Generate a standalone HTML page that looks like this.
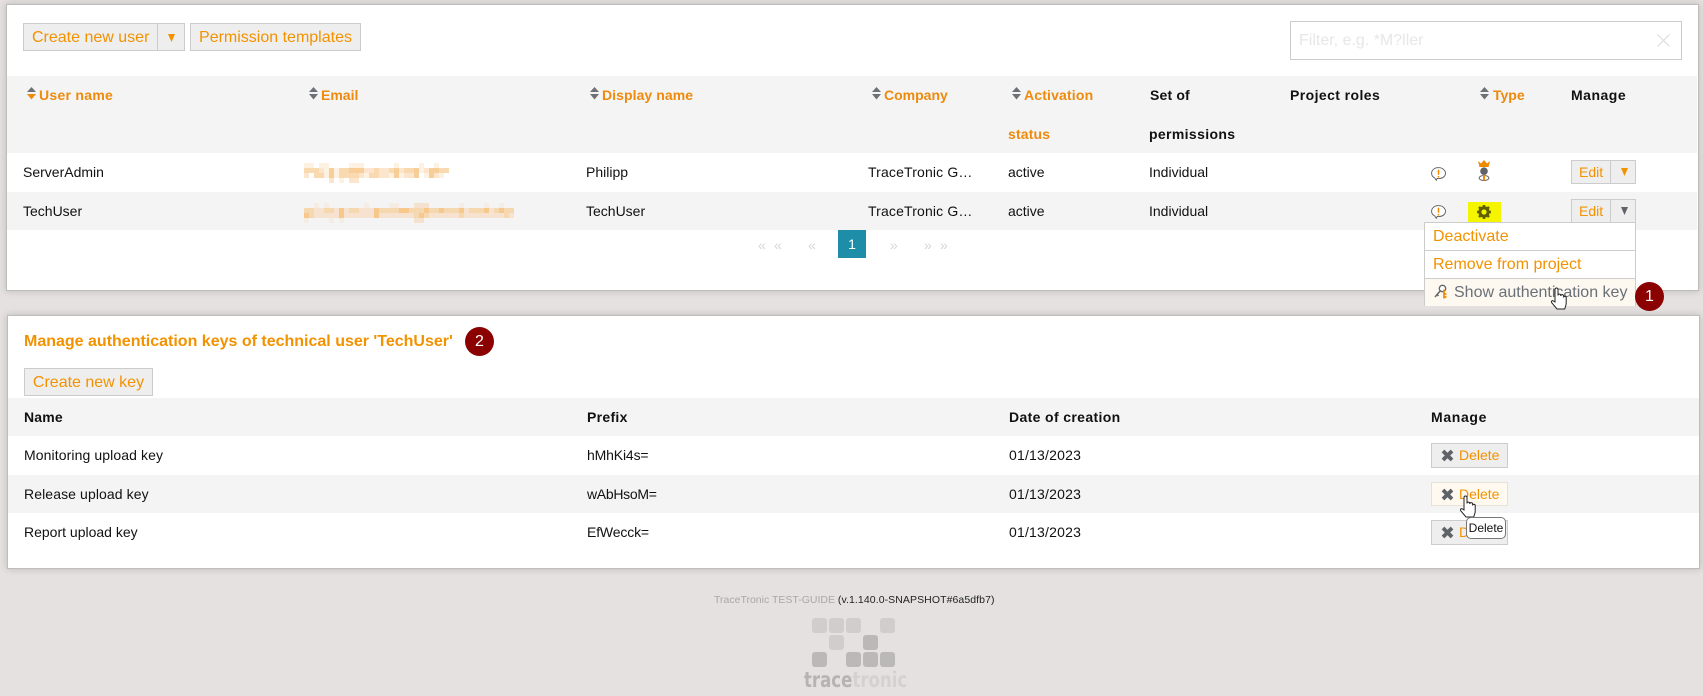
<!DOCTYPE html>
<html><head><meta charset="utf-8"><style>
html,body{margin:0;padding:0;width:1703px;height:696px;overflow:hidden;background:#e4e1e0;font-family:"Liberation Sans",Arial,sans-serif;font-size:14px;color:#111}
.a,.t,.b{position:absolute}
.t{white-space:nowrap;line-height:20px;height:20px}
.o{color:#f39200}
.h{font-weight:bold;letter-spacing:.16px}
.hs{font-weight:bold;color:#ee8a0c;letter-spacing:.16px}
.card{position:absolute;background:#fff;border:1px solid #bdbdbd;box-shadow:0 0 7px rgba(0,0,0,.18)}
.row{position:absolute;background:#f4f4f4}
.b{background:#eee;border:1px solid #ccc;box-sizing:border-box;color:#f39200;white-space:nowrap}
.bt{font-size:16px;line-height:28px;text-align:center}
svg{position:absolute;overflow:visible}
</style></head><body>

<div class="card" style="left:6px;top:4px;width:1691px;height:285px"></div>
<div class="row" style="left:7px;top:76px;width:1690px;height:77px"></div>
<div class="row" style="left:7px;top:192px;width:1690px;height:38px"></div>

<div class="b bt" style="left:23px;top:23px;width:162px;height:28px"><span style="position:absolute;left:8px;top:0">Create new user</span><span class="a" style="left:133px;top:0;bottom:0;border-left:1px solid #ccc"></span><svg style="left:143px;top:10px" width="9" height="8"><path d="M1 0h7L4.500 8z" fill="#f39200"/></svg></div>
<div class="b bt" style="left:190px;top:23px;width:171px;height:28px">Permission templates</div>

<div class="a" style="left:1290px;top:21px;width:392px;height:39px;box-sizing:border-box;border:1px solid #ccc;background:#fff"></div>
<div class="t" style="left:1299px;top:31px;font-size:16px;color:#e8e6e6">Filter, e.g. *M?ller</div>
<svg style="left:1657px;top:34px" width="13" height="13"><path d="M.5.500l12 12M12.500.5l-12 12" stroke="#dcdcdc" stroke-width="1.200" fill="none"/></svg>

<svg style="left:27px;top:87px" width="9" height="13"><path d="M4.500 0L9 5H0z" fill="#6d7077"/><path d="M0 7h9L4.500 12.500z" fill="#ee8a0c"/></svg>
<div class="t hs" style="left:39px;top:85px;letter-spacing:.28px">User name</div>
<svg style="left:309px;top:87px" width="9" height="13"><path d="M4.500 0L9 5H0z" fill="#6d7077"/><path d="M0 7h9L4.500 12.500z" fill="#6d7077"/></svg>
<div class="t hs" style="left:321px;top:85px;letter-spacing:0">Email</div>
<svg style="left:590px;top:87px" width="9" height="13"><path d="M4.500 0L9 5H0z" fill="#6d7077"/><path d="M0 7h9L4.500 12.500z" fill="#6d7077"/></svg>
<div class="t hs" style="left:602px;top:85px;letter-spacing:.07px">Display name</div>
<svg style="left:872px;top:87px" width="9" height="13"><path d="M4.500 0L9 5H0z" fill="#6d7077"/><path d="M0 7h9L4.500 12.500z" fill="#6d7077"/></svg>
<div class="t hs" style="left:884px;top:85px;letter-spacing:0">Company</div>
<svg style="left:1012px;top:87px" width="9" height="13"><path d="M4.500 0L9 5H0z" fill="#6d7077"/><path d="M0 7h9L4.500 12.500z" fill="#6d7077"/></svg>
<div class="t hs" style="left:1024px;top:85px">Activation</div>
<div class="t hs" style="left:1008px;top:124px">status</div>
<div class="t h" style="left:1150px;top:85px">Set of</div>
<div class="t h" style="left:1149px;top:124px;letter-spacing:.36px">permissions</div>
<div class="t h" style="left:1290px;top:85px;letter-spacing:.41px">Project roles</div>
<svg style="left:1480px;top:87px" width="9" height="13"><path d="M4.500 0L9 5H0z" fill="#6d7077"/><path d="M0 7h9L4.500 12.500z" fill="#6d7077"/></svg>
<div class="t hs" style="left:1493px;top:85px;letter-spacing:0">Type</div>
<div class="t h" style="left:1571px;top:85px;letter-spacing:.5px">Manage</div>

<div class="t" style="left:23px;top:162px">ServerAdmin</div>
<svg style="left:304px;top:163px" width="145" height="20">
<path fill="#f7cd98" d="M25 5h5v5h-5zM45 5h15v5h-15zM90 5h5v5h-5zM110 5h5v5h-5zM125 5h10v5h-10zM25 10h5v5h-5zM90 10h5v5h-5zM110 10h5v5h-5zM125 10h5v5h-5z"/>
<path fill="#f9d9b0" d="M0 5h15v5H0zM35 5h10v5H35zM70 5h5v5h-5zM85 5h5v5h-5zM100 5h10v5h-10zM135 5h10v5h-10zM10 10h10v5H10zM35 10h20v5H35zM65 10h10v5H65z"/>
<path fill="#fbe5cc" d="M15 5h5v5h-5zM60 5h10v5H60zM75 5h10v5H75zM95 5h5v5h-5zM120 5h5v5h-5zM0 10h5v5H0zM55 10h5v5h-5zM75 10h10v5H75zM100 10h10v5h-10zM130 10h5v5h-5zM25 15h5v5h-5zM45 15h10v5H45z"/>
<path fill="#fdf1e2" d="M0 0h10v5H0zM15 0h10v5H15zM45 0h15v5H45zM90 0h5v5h-5zM115 0h5v5h-5zM130 0h5v5h-5zM20 5h5v5h-5zM30 5h5v5h-5zM115 5h5v5h-5zM20 10h5v5h-5zM30 10h5v5h-5zM60 10h5v5h-5zM85 10h5v5h-5zM95 10h5v5h-5zM120 10h5v5h-5zM135 10h5v5h-5zM35 15h5v5h-5z"/>
</svg>
<div class="t" style="left:586px;top:162px">Philipp</div>
<div class="t" style="left:868px;top:162px;letter-spacing:.15px">TraceTronic G…</div>
<div class="t" style="left:1008px;top:162px">active</div>
<div class="t" style="left:1149px;top:162px">Individual</div>

<div class="t" style="left:23px;top:201px">TechUser</div>
<svg style="left:304px;top:203px" width="210" height="20">
<path fill="#f6e2cf" d="M0 10h210v5H0zM0 5h210v5H0z"/>
<path fill="#f6c88c" d="M35 5h5v5h-5zM70 5h5v5h-5zM95 5h10v5H95zM120 5h5v5h-5zM135 5h5v5h-5zM155 5h5v5h-5zM180 5h5v5h-5zM195 5h5v5h-5zM0 10h5v5H0zM35 10h5v5h-5zM70 10h5v5h-5zM115 10h5v5h-5z"/>
<path fill="#f6d8b0" d="M0 5h10v5H0zM20 5h10v5H20zM45 5h10v5H45zM75 5h10v5H75zM85 5h10v5H85zM105 5h15v5h-15zM125 5h10v5h-10zM140 5h15v5h-15zM165 5h15v5h-15zM190 5h5v5h-5zM200 5h10v5h-10zM5 10h5v5H5zM110 10h5v5h-5zM120 10h5v5h-5zM155 10h5v5h-5zM200 10h5v5h-5z"/>
<path fill="#f5ece4" d="M10 0h5v5h-5zM20 0h5v5h-5zM60 0h5v5h-5zM85 0h10v5H85zM155 0h5v5h-5zM180 0h5v5h-5zM195 0h5v5h-5zM0 15h5v5H0zM25 15h5v5h-5zM35 15h5v5h-5z"/>
<path fill="#f4e2cf" d="M110 0h15v5h-15zM110 15h10v5h-10z"/>
</svg>
<div class="t" style="left:586px;top:201px">TechUser</div>
<div class="t" style="left:868px;top:201px;letter-spacing:.15px">TraceTronic G…</div>
<div class="t" style="left:1008px;top:201px">active</div>
<div class="t" style="left:1149px;top:201px">Individual</div>

<svg style="left:1431px;top:167px" width="15" height="15"><path d="M7.500.6C3.700.6.600 3 .600 6.300c0 2.300 1.300 3.800 3.200 4.700.3.800.7 1.600 1.500 2.300.1-.7.400-1.300.9-1.800.6.100 1.200.1 1.800.1 3.700-.1 6.500-2.300 6.500-5.300S11.300.6 7.500.6z" fill="#fff" stroke="#5a5a5a" stroke-width=".9"/><path d="M7.500 2.800v5M7.500 9v1.500" stroke="#f08a00" stroke-width="1.500"/></svg>
<svg style="left:1431px;top:205px" width="15" height="15"><path d="M7.500.6C3.700.6.600 3 .600 6.300c0 2.300 1.300 3.800 3.200 4.700.3.800.7 1.600 1.500 2.300.1-.7.400-1.300.9-1.800.6.100 1.200.1 1.800.1 3.700-.1 6.500-2.300 6.500-5.300S11.300.6 7.500.6z" fill="#fff" stroke="#5a5a5a" stroke-width=".9"/><path d="M7.500 2.800v5M7.500 9v1.500" stroke="#f08a00" stroke-width="1.500"/></svg>

<svg style="left:1478px;top:160px" width="13" height="21"><path d="M0 1l3 2.500L6 0l3 3.500L12 1l-1.500 6h-9z" fill="#f08a00"/><circle cx="6" cy="11.200" r="3.800" fill="#606368"/><ellipse cx="6" cy="18" rx="4.800" ry="2.500" fill="#fff" stroke="#666" stroke-width="1"/><path d="M6 15v5.500" stroke="#f08a00" stroke-width="2"/></svg>

<div class="a" style="left:1468px;top:202px;width:33px;height:20px;background:#f5f500"></div>
<svg style="left:1477px;top:205px" width="14" height="14" viewBox="0 0 14 14"><circle cx="7" cy="7" r="4.200" fill="none" stroke="#5f5f00" stroke-width="3"/><path d="M7 0v14M0 7h14M2 2l10 10M12 2L2 12" stroke="#5f5f00" stroke-width="2.500"/><circle cx="7" cy="7" r="2.600" fill="#f5f500"/></svg>

<div class="b" style="left:1571px;top:160px;width:65px;height:24px;font-size:14px;line-height:22px"><span class="a" style="left:7px">Edit</span><span class="a" style="left:38px;top:0;bottom:0;border-left:1px solid #ccc"></span><svg style="left:48px;top:7px" width="9" height="8"><path d="M1 0h7L4.500 8z" fill="#f39200"/></svg></div>
<div class="b" style="left:1571px;top:199px;width:65px;height:24px;font-size:14px;line-height:22px"><span class="a" style="left:7px">Edit</span><span class="a" style="left:38px;top:0;bottom:0;border-left:1px solid #ccc"></span><svg style="left:48px;top:7px" width="9" height="8"><path d="M1 0h7L4.500 8z" fill="#5f6368"/></svg></div>

<div class="t" style="left:758px;top:235px;color:#d6d6d6">«</div>
<div class="t" style="left:774px;top:235px;color:#d6d6d6">«</div>
<div class="t" style="left:808px;top:235px;color:#d6d6d6">«</div>
<div class="a" style="left:838px;top:230px;width:28px;height:28px;background:#1e8ea8;color:#fff;text-align:center;line-height:28px">1</div>
<div class="t" style="left:890px;top:235px;color:#d6d6d6">»</div>
<div class="t" style="left:924px;top:235px;color:#d6d6d6">»</div>
<div class="t" style="left:940px;top:235px;color:#d6d6d6">»</div>

<div class="a" style="left:1424px;top:222px;width:212px;height:84px;box-sizing:border-box;background:#fff;border:1px solid #ccc;border-bottom:0"></div>
<div class="a" style="left:1425px;top:250px;width:210px;height:1px;background:#ccc"></div>
<div class="a" style="left:1425px;top:278px;width:210px;height:1px;background:#ccc"></div>
<div class="a" style="left:1425px;top:279px;width:210px;height:27px;background:#fef9f0"></div>
<div class="t o" style="left:1433px;top:227px;font-size:16px">Deactivate</div>
<div class="t o" style="left:1433px;top:255px;font-size:16px">Remove from project</div>
<svg style="left:1434px;top:284px" width="15" height="16"><circle cx="8.500" cy="4.500" r="3.200" fill="#fff" stroke="#666" stroke-width="1.300"/><path d="M6.500 6.500L1 13M3 10.500l1.500 1.500" stroke="#666" stroke-width="1.500" fill="none"/><path d="M10 5.500v9M10 10h2.500M10 13h2.500" stroke="#f08a00" stroke-width="1.700" fill="none"/></svg>
<div class="t" style="left:1454px;top:283px;font-size:16px;color:#6a7078">Show authentication key</div>

<div class="a" style="left:1635px;top:282px;width:29px;height:29px;border-radius:50%;background:#8b0000;color:#fff;text-align:center;line-height:29px;font-size:16px">1</div>

<div class="card" style="left:7px;top:315px;width:1691px;height:252px"></div>
<div class="t" style="left:24px;top:332px;font-size:16px;font-weight:bold;color:#f39200">Manage authentication keys of technical user 'TechUser'</div>
<div class="a" style="left:465px;top:327px;width:29px;height:29px;border-radius:50%;background:#8b0000;color:#fff;text-align:center;line-height:29px;font-size:16px">2</div>
<div class="b bt" style="left:24px;top:368px;width:129px;height:28px">Create new key</div>

<div class="row" style="left:8px;top:398px;width:1691px;height:38px"></div>
<div class="row" style="left:8px;top:475px;width:1691px;height:38px"></div>
<div class="t h" style="left:24px;top:407px">Name</div>
<div class="t h" style="left:587px;top:407px;letter-spacing:.3px">Prefix</div>
<div class="t h" style="left:1009px;top:407px;letter-spacing:.36px">Date of creation</div>
<div class="t h" style="left:1431px;top:407px;letter-spacing:.66px">Manage</div>

<div class="t" style="left:24px;top:445px;letter-spacing:.1px">Monitoring upload key</div>
<div class="t" style="left:587px;top:445px;letter-spacing:-.15px">hMhKi4s=</div>
<div class="t" style="left:1009px;top:445px;letter-spacing:.2px">01/13/2023</div>
<div class="t" style="left:24px;top:484px;letter-spacing:.1px">Release upload key</div>
<div class="t" style="left:587px;top:484px;letter-spacing:-.3px">wAbHsoM=</div>
<div class="t" style="left:1009px;top:484px;letter-spacing:.2px">01/13/2023</div>
<div class="t" style="left:24px;top:522px">Report upload key</div>
<div class="t" style="left:587px;top:522px;letter-spacing:-.15px">EfWecck=</div>
<div class="t" style="left:1009px;top:522px;letter-spacing:.2px">01/13/2023</div>

<div class="b" style="left:1431px;top:443px;width:77px;height:25px;line-height:23px"><span class="a" style="left:27px">Delete</span><svg style="left:9px;top:5px" width="13" height="13"><path d="M2 2l9 9M11 2l-9 9" stroke="#5f6368" stroke-width="3.800"/></svg></div>
<div class="b" style="left:1431px;top:482px;width:77px;height:24px;line-height:22px;background:#fff9f0;border-color:#e6e2da"><span class="a" style="left:27px">Delete</span><svg style="left:9px;top:5px" width="13" height="13"><path d="M2 2l9 9M11 2l-9 9" stroke="#5f6368" stroke-width="3.800"/></svg></div>
<div class="b" style="left:1431px;top:520px;width:77px;height:25px;line-height:23px"><span class="a" style="left:27px">Delete</span><svg style="left:9px;top:5px" width="13" height="13"><path d="M2 2l9 9M11 2l-9 9" stroke="#5f6368" stroke-width="3.800"/></svg></div>

<svg style="left:1459px;top:495px" width="18" height="24"><path d="M5 15V2.500a1.500 1.500 0 0 1 3 0V8.500a1.400 1.400 0 0 1 2.800 0V9a1.400 1.400 0 0 1 2.800 0v1.500a1.300 1.300 0 0 1 2.600 0V16c0 3-1 4-1.500 6H7L1.800 15.800c-1-1.500.5-2.800 1.700-1.800z" fill="#fff" stroke="#222" stroke-width="1"/></svg>
<div class="a" style="left:1466px;top:517px;width:40px;height:22px;box-sizing:border-box;background:#fff;border:1px solid #777;border-radius:5px;font-size:12px;line-height:20px;text-align:center;color:#111">Delete</div>

<svg style="left:1550px;top:287px" width="18" height="24"><path d="M5 15V2.500a1.500 1.500 0 0 1 3 0V8.500a1.400 1.400 0 0 1 2.800 0V9a1.400 1.400 0 0 1 2.800 0v1.500a1.300 1.300 0 0 1 2.600 0V16c0 3-1 4-1.500 6H7L1.800 15.800c-1-1.500.5-2.800 1.700-1.800z" fill="#fff" stroke="#222" stroke-width="1"/></svg>

<div class="t" style="left:714px;top:590px;font-size:10.500px;color:#aaa7a5">TraceTronic TEST-GUIDE <span style="color:#222;letter-spacing:.08px">(v.1.140.0-SNAPSHOT#6a5dfb7)</span></div>

<svg style="left:812px;top:618px" width="84" height="50"><g fill="#d0cdcc"><rect x="0" width="15" height="15" rx="3"/><rect x="17" width="15" height="15" rx="3"/><rect x="34" width="15" height="15" rx="3"/><rect x="68" width="15" height="15" rx="3"/><rect x="17" y="17" width="15" height="15" rx="3"/></g><g fill="#bbb9b7"><rect x="51" y="17" width="15" height="15" rx="3"/><rect x="0" y="34" width="15" height="15" rx="3"/><rect x="34" y="34" width="15" height="15" rx="3"/><rect x="51" y="34" width="15" height="15" rx="3"/><rect x="68" y="34" width="15" height="15" rx="3"/></g></svg>
<div class="t" style="left:804px;top:669px;font-size:21px;line-height:22px;font-family:'DejaVu Sans',sans-serif;font-weight:bold;color:#b6b4b2;transform:scaleX(.79);transform-origin:0 0">trace<span style="color:#d4d1d0">tronic</span></div>

</body></html>
